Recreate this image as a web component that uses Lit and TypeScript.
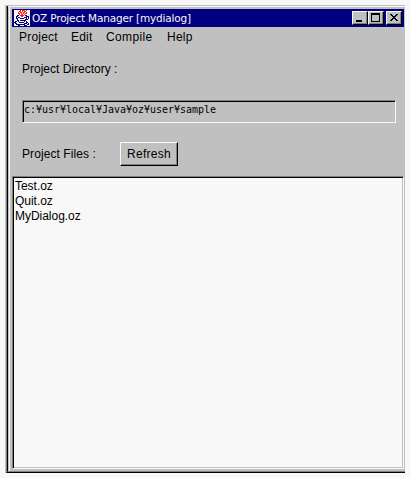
import { LitElement, html, css, svg } from "lit";
import { customElement } from "lit/decorators.js";

const CUP: string[] = [
  "......r.rrr.r...",
  ".....rr.r.rr....",
  "....r.rr.rr.r...",
  "....rr.r.r.rr...",
  ".....r.rr.r.....",
  "...bb.rrrr.bb...",
  "..bb...rr...bbb.",
  "..b.bb....bbb.b.",
  "..bb..bbbb..b.b.",
  "...b.......bbb..",
  "...bb.bbbbbb....",
  ".bb.b.....b.b...",
  "bb...bbbbb..bb..",
  ".bb.......bbb.b.",
  "..bbbbbbbbb..bb.",
  "....bb....bbb...",
];

@customElement("app-root")
export class AppRoot extends LitElement {
  static styles = css`
    :host { display: block; width: 410px; height: 478px; background: #f8f8f8; overflow: hidden; font: 12px/15px "Liberation Sans", Arial, sans-serif; color: #000; }
    * { box-sizing: border-box; }
    .page { padding: 5px 5px 5px 5px; height: 478px; }
    .shadow { height: 468px; border-left: 1px solid #c0c0c0; border-top: 1px solid #c0c0c0; }
    .edge { height: 467px; border-left: 1px solid #808080; border-bottom: 1px solid #000; }
    .dark { height: 466px; border-left: 1px solid #000; border-bottom: 1px solid #808080; }
    .frame { height: 465px; border-left: 1px solid #c0c0c0; border-top: 1px solid #f8f8f8; }
    .win { height: 464px; background: #c0c0c0; border-left: 1px solid #f8f8f8; padding: 2px 1px 0 2px; display: flex; flex-direction: column; }
    .title { height: 18px; background: #000080; display: flex; align-items: center; padding: 0 2px; }
    .icon { width: 16px; height: 16px; background: #f8f8f8; display: block; flex: none; }
    .name { flex: 1; color: #f8f8f8; font: 10.5px/18px "DejaVu Sans", sans-serif; padding-left: 2px; white-space: pre; }
    .name span { letter-spacing: -0.18px; }
    .ctl { width: 16px; height: 14px; background: #c0c0c0; border: 1px solid; border-color: #f8f8f8 #000 #000 #f8f8f8; box-shadow: inset -1px -1px #808080; flex: none; }
    .ctl svg { display: block; width: 14px; height: 12px; }
    .close { margin-left: 2px; }
    .menu { height: 20px; display: flex; gap: 14px; padding: 3px 0 0 7px; letter-spacing: 0.22px; }
    .item { white-space: nowrap; }
    .m1 { width: 38px; } .m2 { width: 21px; } .m3 { width: 47px; letter-spacing: 0.35px; } .m4 { width: 30px; }
    .label { white-space: pre; }
    .dir { margin: 15px 0 0 10px; letter-spacing: 0; }
    .field { margin: 23px 8px 0 10px; height: 23px; border: 1px solid; border-color: #808080 #f8f8f8 #f8f8f8 #808080; box-shadow: inset 1px 1px #000; font: 10px/17px "DejaVu Sans Mono", monospace; padding: 0 0 0 1px; letter-spacing: -0.02px; }
    .row { display: flex; align-items: center; height: 24px; margin: 19px 0 0 10px; }
    .files { width: 98px; letter-spacing: 0.08px; }
    .btn { width: 58px; height: 24px; margin: 0; padding: 0; background: #c0c0c0; border: 1px solid; border-color: #f8f8f8 #000 #000 #f8f8f8; box-shadow: inset -1px -1px #808080; border-radius: 0; font: inherit; letter-spacing: 0.25px; color: #000; }
    .list { margin-top: 10px; height: 293px; background: #f8f8f8; border: 1px solid; border-color: #808080 #f8f8f8 #f8f8f8 #808080; box-shadow: inset 1px 1px #000, inset -1px -1px #c0c0c0; padding: 2px 0 0 2px; letter-spacing: -0.03px; }
    .entry { height: 15px; }
  `;

  private cup() {
    return svg`${CUP.flatMap((line, y) =>
      [...line].map((c, x) =>
        c === "." ? null : svg`<rect x=${x} y=${y} width="1" height="1" fill=${c === "r" ? "#ff2020" : "#000080"}></rect>`
      )
    )}`;
  }

  render() {
    return html`
      <div class="page"><div class="shadow"><div class="edge"><div class="dark"><div class="frame"><div class="win">
        <div class="title">
          <svg class="icon" viewBox="0 0 16 16" shape-rendering="crispEdges">${this.cup()}</svg>
          <div class="name"><span>OZ Project Manager [mydialog]</span></div>
          <div class="ctl"><svg viewBox="0 0 14 12" shape-rendering="crispEdges"><path d="M3 8h6v2H3z" /></svg></div>
          <div class="ctl"><svg viewBox="0 0 14 12" shape-rendering="crispEdges"><path fill-rule="evenodd" d="M2 1h9v9H2zM3 3v6h7V3z" /></svg></div>
          <div class="ctl close"><svg viewBox="0 0 14 12" shape-rendering="crispEdges"><path d="M3 2h2v1h1v1h2V3h1V2h2v1h-1v1H9v1H8v1h1v1h1v1h1v1H9V8H8V7H6v1H5v1H3V8h1V7h1V6h1V5H5V4H4V3H3z" /></svg></div>
        </div>
        <div class="menu"><span class="item m1">Project</span><span class="item m2">Edit</span><span class="item m3">Compile</span><span class="item m4">Help</span></div>
        <div class="label dir">Project Directory :</div>
        <div class="field">c:¥usr¥local¥Java¥oz¥user¥sample</div>
        <div class="row"><div class="label files">Project Files :</div><button class="btn">Refresh</button></div>
        <div class="list">${["Test.oz", "Quit.oz", "MyDialog.oz"].map((f) => html`<div class="entry">${f}</div>`)}</div>
      </div></div></div></div></div></div>
    `;
  }
}
